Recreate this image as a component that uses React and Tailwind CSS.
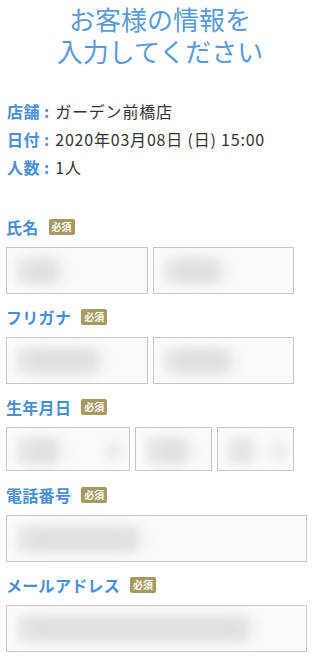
const Badge = () => (
  <span className="ml-[10px] inline-flex h-[16px] w-[26px] items-center justify-center rounded-[2px] bg-[#a69a62] text-[10px] font-bold leading-none text-white">
    必須
  </span>
);

const Label = ({ children }) => (
  <div className="flex h-[18px] items-center">
    <span className="text-[16px] font-bold leading-none tracking-[0.3px] text-[#4a8fd6]">{children}</span>
    <Badge />
  </div>
);

const Field = ({ className = '', blob = 'w-[40px]', blob2 }) => (
  <div className={`relative h-[47px] overflow-hidden border border-[#c6c6c6] bg-[#fafafa] ${className}`}>
    <div className={`absolute left-[10px] top-[10px] h-[26px] bg-[#f1f1f1] blur-[2px] ${blob}`} />
    <div className={`absolute left-[14px] top-[13px] h-[20px] rounded-full bg-[#dcdcdc] blur-[8px] ${blob}`} />
    {blob2 && <div className={`absolute top-[15px] h-[16px] rounded-full bg-[#e4e4e4] blur-[6px] ${blob2}`} />}
  </div>
);

export default function App() {
  const info = [
    ['店舗', 'ガーデン前橋店'],
    ['日付', '2020年03月08日 (日) 15:00'],
    ['人数', '1人'],
  ];

  return (
    <div className="w-[320px] bg-white pb-[5px] font-['Noto_Sans_CJK_JP','Noto_Sans',sans-serif]">
      <h1 className="pt-[3px] text-center text-[26px] font-normal leading-[32px] text-[#5b9bd5]">
        お客様の情報を
        <br />
        入力してください
      </h1>

      <div className="mt-[33px] space-y-[6px] px-[7px]">
        {info.map(([k, v]) => (
          <div key={k} className="flex items-center text-[16px] leading-[22px]">
            <span className="font-bold tracking-[0.5px] text-[#4a8fd6]">{k}</span>
            <span className="ml-[4px] mr-[6px] font-bold text-[#4a8fd6]">:</span>
            <span className="tracking-[0.8px] text-[#333]">{v}</span>
          </div>
        ))}
      </div>

      <div className="mt-[40px] px-[6px]">
        <Label>氏名</Label>
        <div className="mt-[11px] flex w-[288px] gap-[5px]">
          <Field className="flex-1" blob="w-[40px]" />
          <Field className="flex-1" blob="w-[55px]" />
        </div>

        <div className="mt-[14px]">
          <Label>フリガナ</Label>
        </div>
        <div className="mt-[11px] flex w-[288px] gap-[5px]">
          <Field className="flex-1" blob="w-[80px]" />
          <Field className="flex-1" blob="w-[65px]" />
        </div>

        <div className="mt-[14px]">
          <Label>生年月日</Label>
        </div>
        <div className="mt-[11px] flex w-[288px] gap-[5px]">
          <Field className="!h-[44px] w-[124px]" blob="w-[40px]" blob2="left-[100px] w-[14px]" />
          <Field className="!h-[44px] flex-1" blob="w-[40px]" />
          <Field className="!h-[44px] flex-1" blob="w-[22px]" blob2="left-[55px] w-[12px]" />
        </div>

        <div className="mt-[15px]">
          <Label>電話番号</Label>
        </div>
        <Field className="mt-[11px] w-[301px]" blob="w-[120px]" />

        <div className="mt-[14px]">
          <Label>メールアドレス</Label>
        </div>
        <Field className="mt-[11px] w-[301px]" blob="w-[230px]" />
      </div>
    </div>
  );
}
